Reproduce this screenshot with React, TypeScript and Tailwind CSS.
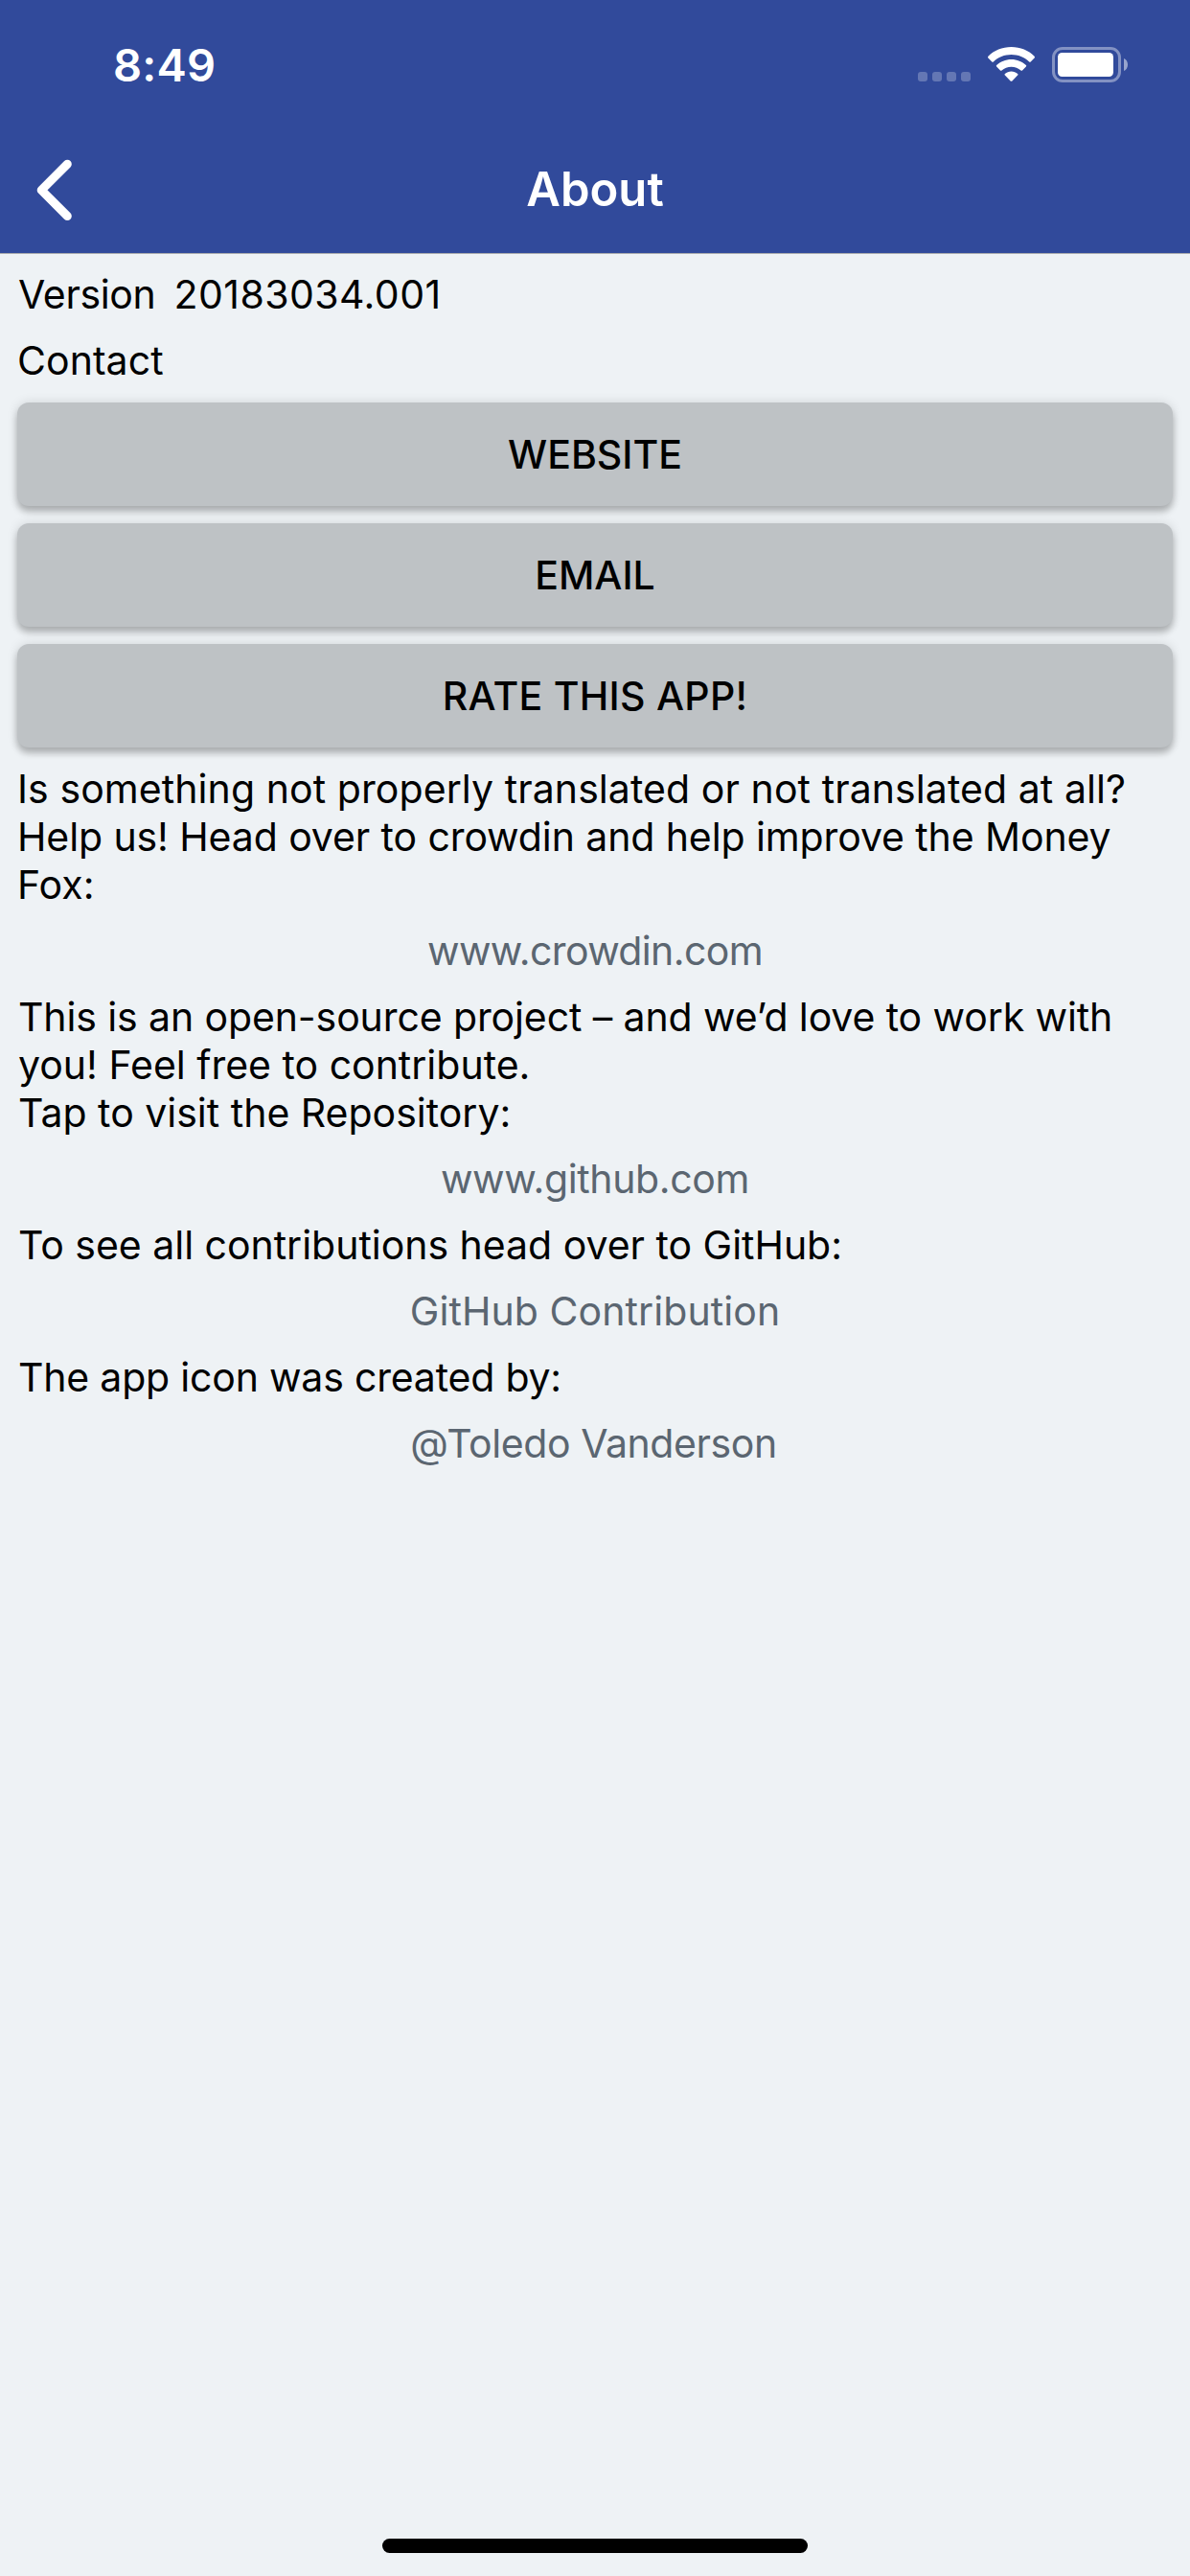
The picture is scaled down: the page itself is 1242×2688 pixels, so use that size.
import React from "react";

function StatusBar() {
  return (
    <div className="flex h-[132px] items-start justify-between pl-[118px] pr-[65px]">
      <span className="mt-[43px] text-[47px] font-semibold leading-[50px] tracking-[0.2px]">8:49</span>
      <div className="mt-[49px] flex h-[37px] items-end">
        <div className="mb-px flex gap-[5px]">
          <span className="size-[10px] rounded-[3px] bg-white/25" />
          <span className="size-[10px] rounded-[3px] bg-white/25" />
          <span className="size-[10px] rounded-[3px] bg-white/25" />
          <span className="size-[10px] rounded-[3px] bg-white/25" />
        </div>
        <svg className="mb-px ml-[18px]" width="49" height="36" viewBox="0 0 49 36" fill="white">
          <path d="M24.5 0C34 0 42.500 3.500 48.600 9.800C49.100 10.300 49.100 11 48.600 11.500L44.700 15.400C44.300 15.800 43.600 15.800 43.200 15.400C38.300 10.700 31.700 8 24.500 8C17.300 8 10.700 10.700 5.800 15.400C5.400 15.800 4.700 15.800 4.300 15.400L0.400 11.500C-0.100 11-0.100 10.300 0.400 9.800C6.500 3.500 15 0 24.500 0Z" />
          <path d="M24.500 12.900C30.500 12.900 35.900 15.200 39.900 19C40.400 19.500 40.400 20.100 39.900 20.600L36 24.500C35.600 24.900 34.900 24.900 34.500 24.500C31.800 22.100 28.300 20.700 24.500 20.700C20.700 20.700 17.200 22.100 14.500 24.500C14.100 24.900 13.400 24.900 13 24.500L9.100 20.600C8.600 20.100 8.600 19.500 9.100 19C13.100 15.200 18.500 12.900 24.500 12.900Z" />
          <path d="M24.500 25.500C27 25.500 29.300 26.400 31.100 27.900C31.600 28.300 31.600 29 31.100 29.500L25.400 35.400C24.900 35.900 24.100 35.900 23.600 35.400L17.900 29.500C17.400 29 17.400 28.300 17.900 27.900C19.700 26.400 22 25.500 24.500 25.500Z" />
        </svg>
        <svg className="ml-[18px]" width="79" height="37" viewBox="0 0 79 37">
          <rect x="1.5" y="1.5" width="69" height="34" rx="9.500" fill="none" stroke="white" strokeOpacity="0.4" strokeWidth="3" />
          <rect x="6" y="6" width="58" height="25" rx="4.500" fill="white" />
          <path d="M75 12C77.600 13 79 15.600 79 18.500C79 21.400 77.600 24 75 25Z" fill="white" fillOpacity="0.5" />
        </svg>
      </div>
    </div>
  );
}

function NavBar() {
  return (
    <div className="grid h-[132px] grid-cols-[1fr_auto_1fr] items-center">
      <button type="button" aria-label="Back" className="ml-[36px] flex w-[42px]">
        <svg width="42" height="66" viewBox="0 0 42 66" fill="none" stroke="white" strokeWidth="9" strokeLinecap="round" strokeLinejoin="round">
          <path d="M34.300 6.300L7.200 33.400L34.300 60.500" />
        </svg>
      </button>
      <h1 className="text-[49px] font-semibold leading-[60px]">About</h1>
      <span />
    </div>
  );
}

function ActionButton({ children, className = "" }: { children: React.ReactNode; className?: string }) {
  return (
    <button
      type="button"
      className={`flex h-[108px] w-full items-center justify-center rounded-[12px] bg-[#bec2c5] font-medium shadow-[0_6px_7px_rgba(0,0,0,0.24),0_0_12px_rgba(0,0,0,0.12)] ${className}`}
    >
      {children}
    </button>
  );
}

function Link({ children, className }: { children: React.ReactNode; className: string }) {
  return <a className={`block text-center text-[#5b6671] ${className}`}>{children}</a>;
}

export default function App() {
  return (
    <div className="flex h-[2688px] w-[1242px] flex-col bg-[#eef2f5] font-['Inter',sans-serif] text-[41px] leading-[50px] text-black">
      <header className="h-[265px] border-b border-[#a9abae] bg-[#314a9b] text-white">
        <StatusBar />
        <NavBar />
      </header>
      <main className="flex flex-1 flex-col gap-[19px] whitespace-nowrap px-[18px] pt-[17px]">
        <div className="flex gap-[19px] pl-px">
          <span className="tracking-[-0.35px]">Version</span>
          <span className="tracking-[0.45px]">20183034.001</span>
        </div>
        <p className="tracking-[0.06px]">Contact</p>
        <div className="-mb-px flex flex-col gap-[18px]">
          <ActionButton>WEBSITE</ActionButton>
          <ActionButton>EMAIL</ActionButton>
          <ActionButton className="tracking-[0.28px]">RATE THIS APP!</ActionButton>
        </div>
        <p>
          <span className="block tracking-[0.078px]">Is something not properly translated or not translated at all?</span>
          <span className="block tracking-[-0.1px]">Help us! Head over to crowdin and help improve the Money</span>
          <span className="block">Fox:</span>
        </p>
        <Link className="tracking-[-0.62px]">www.crowdin.com</Link>
        <div className="pl-px">
          <p className="tracking-[-0.11px]">This is an open-source project – and we’d love to work with</p>
          <p>you! Feel free to contribute.</p>
          <p>Tap to visit the Repository:</p>
        </div>
        <Link className="tracking-[-0.36px]">www.github.com</Link>
        <p className="pl-px tracking-[-0.02px]">To see all contributions head over to GitHub:</p>
        <Link className="tracking-[0.08px]">GitHub Contribution</Link>
        <p className="pl-px tracking-[-0.2px]">The app icon was created by:</p>
        <Link className="pr-[3px] tracking-[-0.42px]">@Toledo Vanderson</Link>
      </main>
      <footer className="flex justify-center pb-6">
        <span className="h-[15px] w-[444px] rounded-full bg-black" />
      </footer>
    </div>
  );
}
